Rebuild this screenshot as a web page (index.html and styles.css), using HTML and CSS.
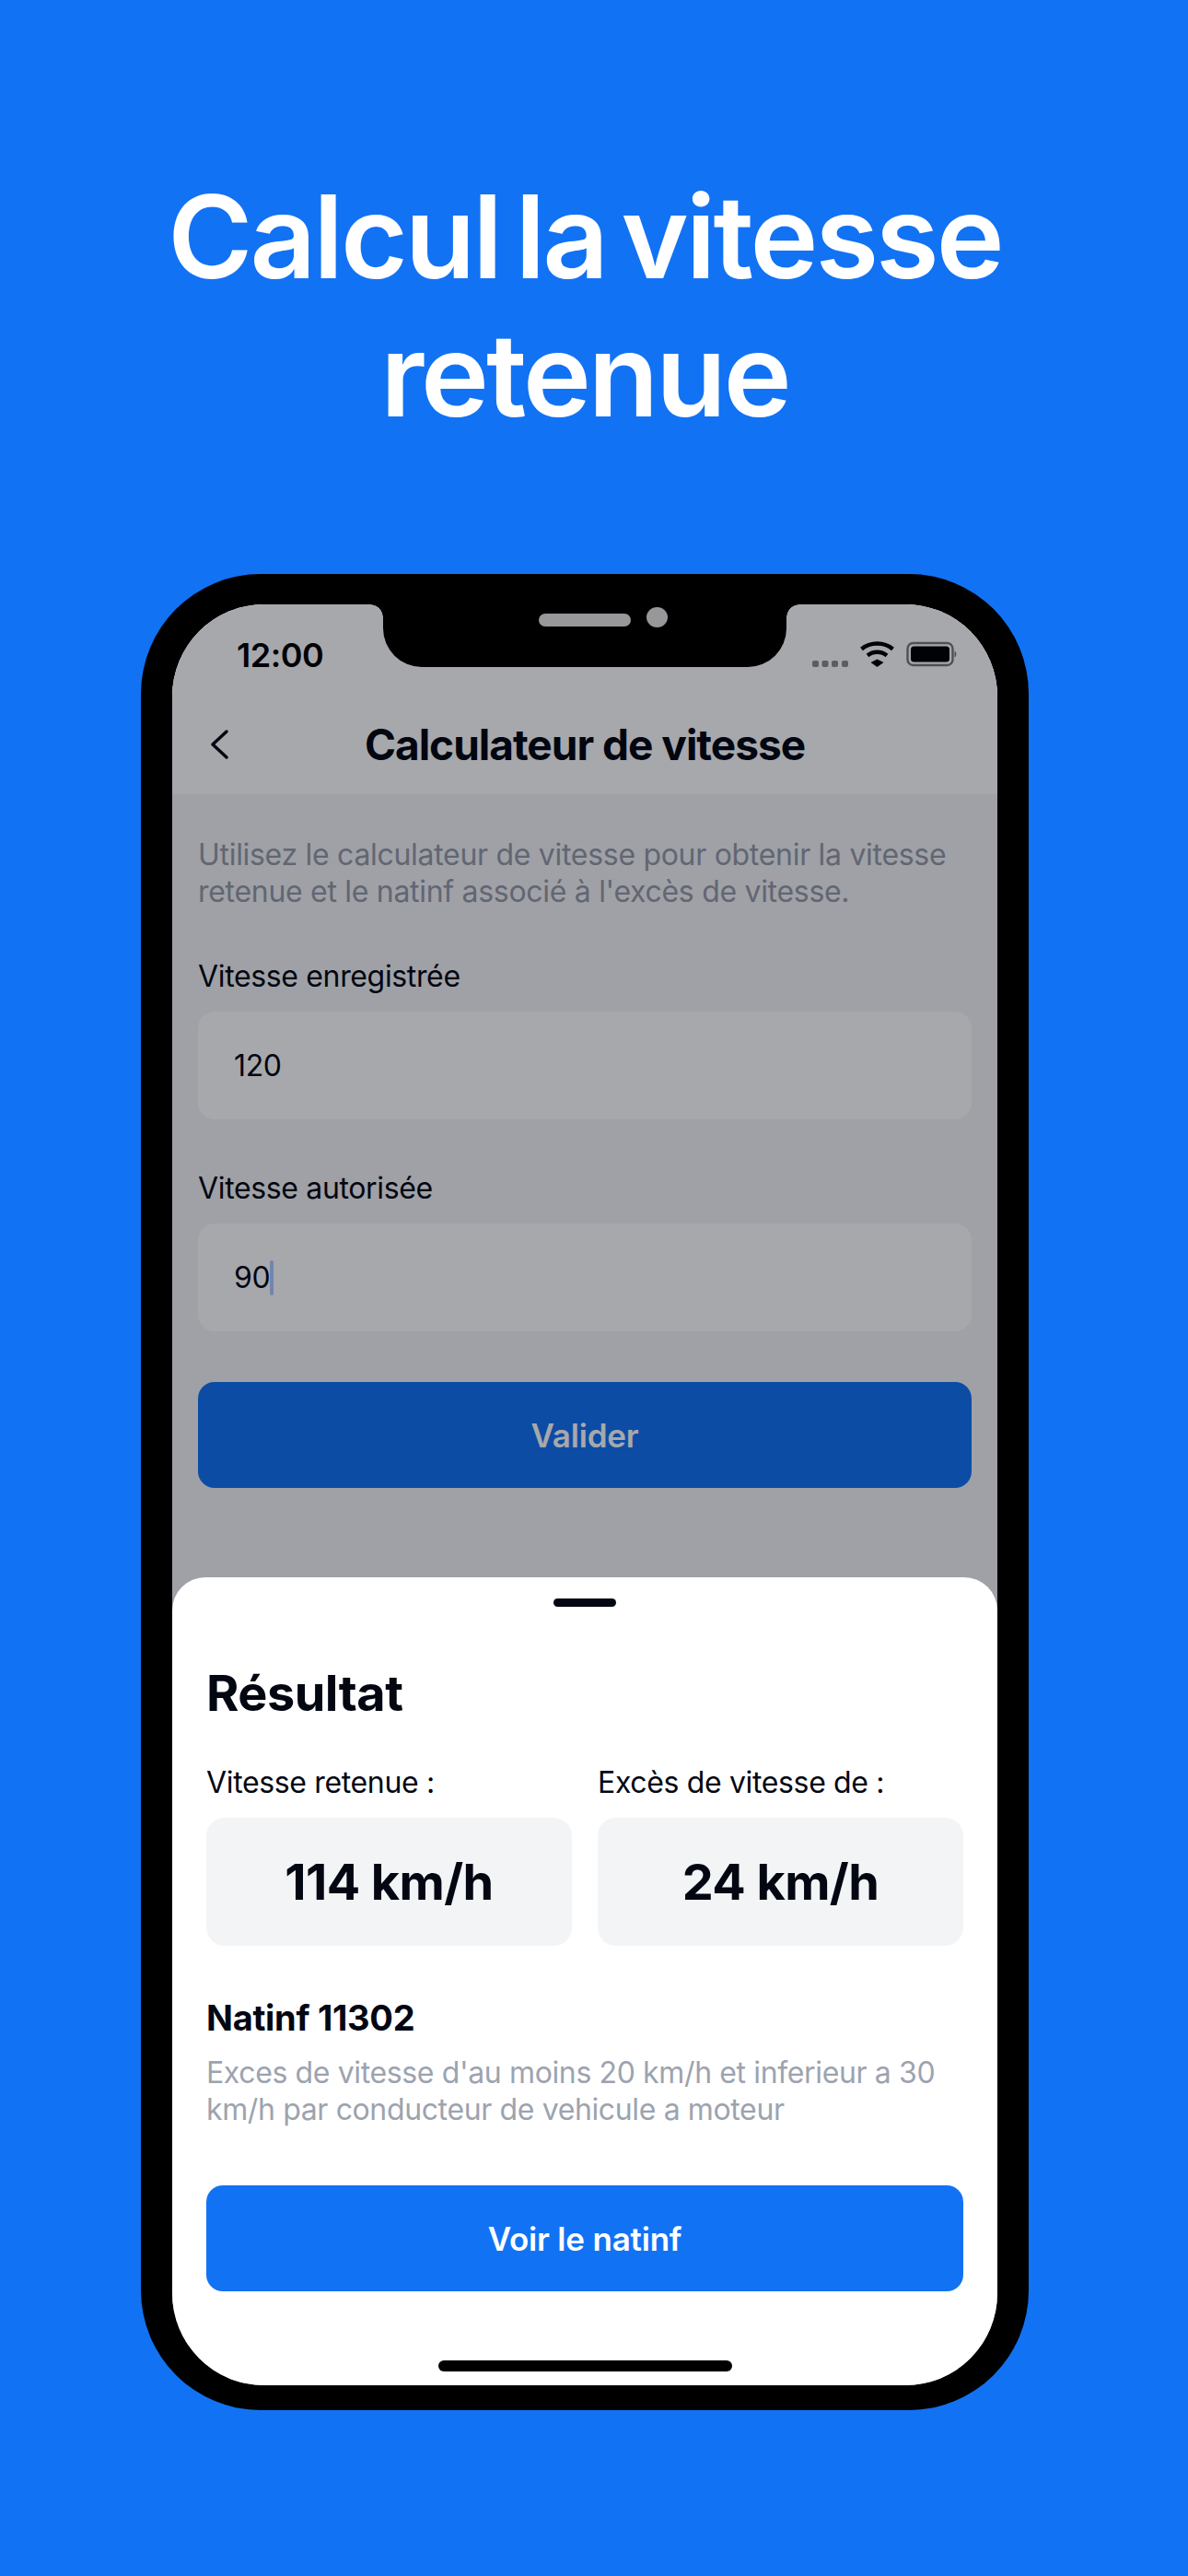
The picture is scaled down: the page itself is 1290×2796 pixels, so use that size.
FILE: index.html
```html
<!DOCTYPE html>
<html lang="fr">
<head>
<meta charset="utf-8">
<title>Calcul la vitesse retenue</title>
<link rel="stylesheet" href="styles.css">
</head>
<body>
<main class="page">
  <h1 class="headline">Calcul la vitesse<br>retenue</h1>
  <div class="phone">
    <div class="screen">
      <header class="top">
        <div class="status">
          <span class="time">12:00</span>
          <svg class="status-icons" width="160" height="30" viewBox="0 0 160 30">
            <g fill="#8b8c90"><rect x="1" y="21" width="7" height="7" rx="2"/><rect x="11.5" y="21" width="7" height="7" rx="2"/><rect x="22" y="21" width="7" height="7" rx="2"/><rect x="33" y="21" width="7" height="7" rx="2"/></g>
            <path d="M54.500 8.500C64 .5 79 .5 88.500 8.500" fill="none" stroke="#000" stroke-width="4.400"/>
            <path d="M61 15.500C67 10.500 76 10.500 82 15.500" fill="none" stroke="#000" stroke-width="4.400"/>
            <path d="M64.500 23 71.500 19.500 78.500 23 71.500 28Z" fill="#000"/>
            <rect x="104.500" y="2" width="49" height="24" rx="6" fill="none" stroke="#77787c" stroke-width="2.400"/>
            <rect x="108" y="5.500" width="42" height="17" rx="3.500" fill="#000"/>
            <path d="M155.500 10.500c2.500 1 2.500 6 0 7z" fill="#77787c"/>
          </svg>
        </div>
        <div class="nav">
          <svg class="back" width="20" height="32" viewBox="0 0 20 32"><path d="M18 2 3 16l15 14" fill="none" stroke="#030712" stroke-width="3.400" stroke-linecap="round" stroke-linejoin="round"/></svg>
          <h2 class="nav-title">Calculateur de vitesse</h2>
        </div>
      </header>
      <section class="form">
        <p class="intro">Utilisez le calculateur de vitesse pour obtenir la vitesse retenue et le natinf associé à l'excès de vitesse.</p>
        <div class="field">
          <label class="field-label">Vitesse enregistrée</label>
          <div class="input">120</div>
        </div>
        <div class="field">
          <label class="field-label">Vitesse autorisée</label>
          <div class="input">90<span class="caret"></span></div>
        </div>
        <button class="btn submit">Valider</button>
      </section>
      <div class="scrim"></div>
      <div class="notch"><span class="speaker"></span><span class="camera"></span></div>
      <section class="sheet">
        <div class="handle"></div>
        <h3 class="sheet-title">Résultat</h3>
        <div class="results">
          <div class="result">
            <div class="result-label">Vitesse retenue :</div>
            <div class="result-box">114 km/h</div>
          </div>
          <div class="result">
            <div class="result-label">Excès de vitesse de :</div>
            <div class="result-box">24 km/h</div>
          </div>
        </div>
        <div class="natinf">Natinf 11302</div>
        <p class="natinf-desc">Exces de vitesse d'au moins 20 km/h et inferieur a 30 km/h par conducteur de vehicule a moteur</p>
        <button class="btn primary">Voir le natinf</button>
        <div class="home-bar"></div>
      </section>
    </div>
  </div>
</main>
</body>
</html>
```
FILE: styles.css
```css
* { box-sizing: border-box; }
html, body { margin: 0; padding: 0; }
body {
  background: #1272f4;
  font-family: Inter, "Liberation Sans", sans-serif;
  color: #030712;
}
.page {
  width: 1290px;
  height: 2796px;
  padding-right: 20px;
  display: flex;
  flex-direction: column;
  align-items: center;
  overflow: hidden;
}
.headline {
  margin: 0;
  padding-top: 182px;
  font-size: 125px;
  line-height: 150px;
  font-weight: 580;
  letter-spacing: -3px;
  word-spacing: -12px;
  color: #fff;
  text-align: center;
}
.phone {
  margin-top: 141px;
  width: 964px;
  height: 1993px;
  padding: 33px 34px 27px;
  background: #000;
  border-radius: 130px;
}
.screen {
  position: relative;
  height: 100%;
  overflow: hidden;
  border-radius: 100px;
  background: #f3f4f6;
}
.top { background: #fff; height: 206px; }
.status {
  display: flex;
  justify-content: space-between;
  align-items: flex-start;
  padding: 33px 42px 0 70px;
  height: 124px;
}
.time { font-size: 36px; line-height: 44px; font-weight: 600; letter-spacing: -0.5px; color: #000; }
.status-icons { margin-top: 7px; }
.nav {
  position: relative;
  display: flex;
  justify-content: center;
  align-items: center;
  height: 56px;
}
.back { position: absolute; left: 41px; top: 12px; }
.nav-title { margin: 0; font-size: 46px; line-height: 56px; font-weight: 650; letter-spacing: -1px; }
.form { padding: 46px 28px 0; }
.intro { margin: 0 0 52px; font-size: 32px; line-height: 40px; letter-spacing: -0.3px; color: #959aa8; }
.field { margin-bottom: 55px; }
.field-label { display: block; font-size: 32px; line-height: 40px; letter-spacing: -0.35px; margin-bottom: 18px; }
.input {
  display: flex;
  align-items: center;
  height: 117px;
  padding-left: 39px;
  background: #fff;
  border-radius: 18px;
  font-size: 32px;
  letter-spacing: -0.35px;
}
.caret { width: 4px; height: 38px; background: #aecbff; border-radius: 2px; }
.btn {
  display: block;
  width: 100%;
  height: 115px;
  border: 0;
  border-radius: 18px;
  background: #1272f4;
  color: #fff;
  font: 600 35px Inter, "Liberation Sans", sans-serif;
  letter-spacing: -0.2px;
}
.scrim { position: absolute; inset: 0; background: rgba(3, 7, 18, 0.35); }
.notch {
  position: absolute;
  top: 0;
  left: 229px;
  width: 438px;
  height: 68px;
  background: #000;
  border-radius: 0 0 42px 42px;
}
.notch::before,
.notch::after {
  content: "";
  position: absolute;
  top: 0;
  width: 14px;
  height: 14px;
}
.notch::before { left: -14px; background: radial-gradient(circle at 0 100%, transparent 13.500px, #000 14px); }
.notch::after { right: -14px; background: radial-gradient(circle at 100% 100%, transparent 13.500px, #000 14px); }
.speaker { position: absolute; left: 169px; top: 10px; width: 100px; height: 14px; border-radius: 7px; background: #98989a; }
.camera { position: absolute; left: 286px; top: 3px; width: 23px; height: 22px; border-radius: 50%; background: #98989a; }
.sheet {
  position: absolute;
  left: 0;
  right: 0;
  bottom: 0;
  height: 877px;
  padding: 23px 37px 0;
  background: #fff;
  border-radius: 36px 36px 0 0;
}
.handle { width: 68px; height: 9px; margin: 0 auto; border-radius: 5px; background: #030712; }
.sheet-title { margin: 61px 0 0; font-size: 54px; line-height: 66px; font-weight: 700; letter-spacing: -0.5px; }
.results { display: grid; grid-template-columns: 397px 397px; gap: 28px; margin-top: 44px; }
.result-label { font-size: 32px; line-height: 40px; letter-spacing: -0.35px; margin-bottom: 18px; }
.result-box {
  display: flex;
  align-items: center;
  justify-content: center;
  height: 139px;
  background: #f3f4f6;
  border-radius: 20px;
  font-size: 54px;
  font-weight: 700;
  letter-spacing: -0.6px;
}
.natinf { margin-top: 55px; font-size: 38px; line-height: 46px; font-weight: 700; letter-spacing: -0.3px; }
.natinf-desc { margin: 17px 0 0; font-size: 32px; line-height: 40px; letter-spacing: -0.37px; color: #9ca3af; }
.primary { margin-top: 62px; }
.home-bar { width: 319px; height: 12px; margin: 75px auto 0; border-radius: 6px; background: #000; }
```
